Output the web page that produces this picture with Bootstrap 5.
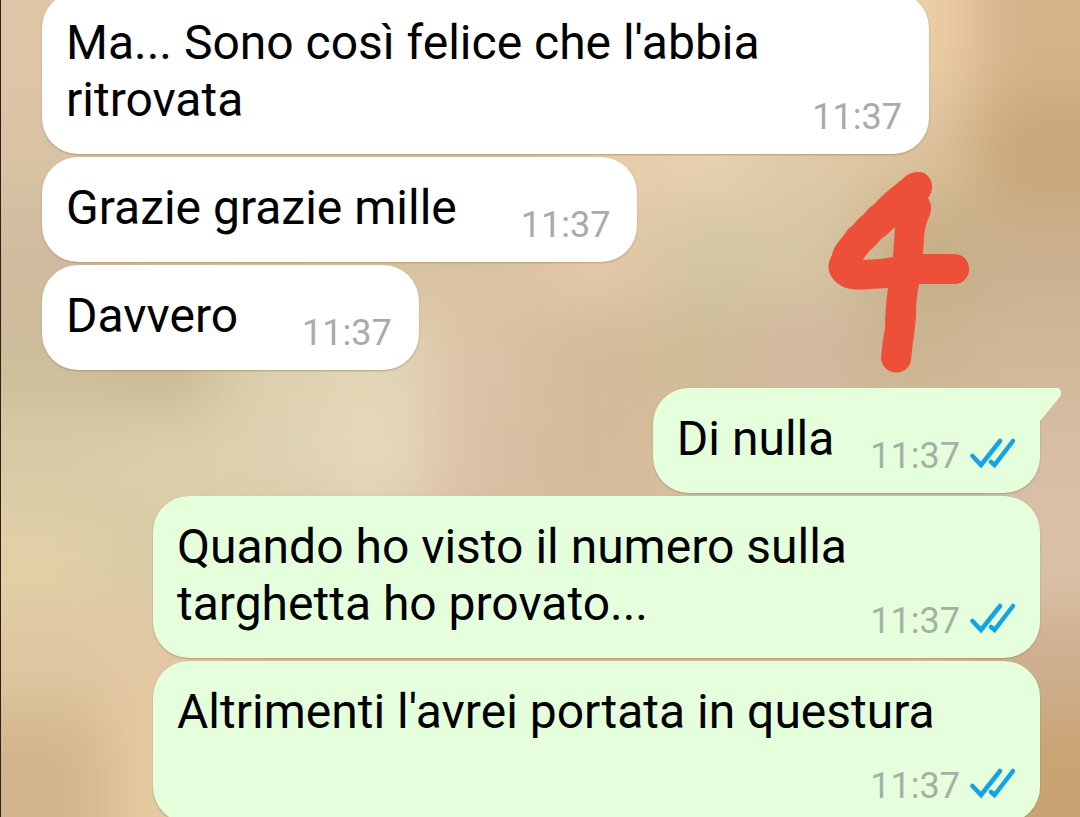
<!DOCTYPE html>
<html lang="it">
<head>
<meta charset="utf-8">
<meta name="viewport" content="width=device-width, initial-scale=1">
<title>Chat</title>
<link href="https://cdn.jsdelivr.net/npm/bootstrap@5.3.0/dist/css/bootstrap.min.css" rel="stylesheet">
<style>
  body { font-family: Roboto, "Noto Sans", sans-serif; }
  .chat-screen { border-left: 1px solid #2e2015; background: #d8bf9e; }
  .thread { padding: 0 40px 0 41px; margin-top: -8px; gap: 3px; }
  .bubble {
    display: flow-root;
    max-width: 887px;
    padding: 22px 25px 8px 24px;
    border-radius: 36px;
    background: #fff;
    color: #000;
    font-size: 48px;
    line-height: 57px;
    box-shadow: 0 1px 2px #8b735580;
  }
  .bubble-out { background: #e5ffdc; }
  .bubble-first { margin-top: 15px; border-top-right-radius: 0; }
  .stamp {
    float: right;
    margin: 18px 2px 0 64px;
    font-size: 36px;
    color: #a7abae;
  }
  .bubble-out .stamp { margin-left: 36px; margin-right: 0; color: #a5b0a5; }
  .ticks { width: 45px; height: 32px; margin: 0 0 6px 10px; }
  .tail { left: 100%; top: 0; width: 22px; height: 36px; }
  .scribble { left: 76%; top: 168px; width: 150px; height: 210px; }
</style>
</head>
<body>
<svg class="position-absolute" width="0" height="0" aria-hidden="true">
  <symbol id="read" viewBox="0 0 45 32">
    <g fill="none" stroke="#14a4e6" stroke-width="4.500" stroke-linecap="round">
      <path d="M2.500 18 11 27 30 3"/>
      <path d="M21 24 24.500 27 43 3"/>
    </g>
  </symbol>
</svg>
<main class="chat-screen position-relative vh-100 overflow-hidden">
  <!-- blurred wallpaper: a coarse grid of colour patches -->
  <svg class="position-absolute top-0 start-0 w-100 h-100" viewBox="0 0 10 8" preserveAspectRatio="none" aria-hidden="true">
    <filter id="soft" filterUnits="userSpaceOnUse" x="-1" y="-1" width="12" height="10" color-interpolation-filters="sRGB"><feGaussianBlur stdDeviation=".3"/></filter>
    <g filter="url(#soft)">
      <path d="M-1-1H11V9H-1Z" fill="#d8bf9e"/>
      <path d="M-1-1H1V1H-1Z" fill="#dfc5a6"/>
      <path d="M8-1H9V1H8Z" fill="#edcfa8"/>
      <path d="M9-1H11V1H9Z" fill="#d3b388"/>
      <path d="M-1 1H1V2H-1Z" fill="#d9c3a4"/>
      <path d="M5 1H6V2H5Z" fill="#e8cbab"/>
      <path d="M6 1H7V2H6Z" fill="#e8d2b0"/>
      <path d="M7 1H8V2H7Z" fill="#dfcaa7"/>
      <path d="M8 1H9V2H8Z" fill="#dcc29d"/>
      <path d="M9 1H11V2H9Z" fill="#c7a778"/>
      <path d="M-1 2H1V3H-1Z" fill="#d0bba0"/>
      <path d="M4 2H5V3H4Z" fill="#d8c4a0"/>
      <path d="M5 2H6V3H5Z" fill="#e4c9a8"/>
      <path d="M6 2H7V3H6Z" fill="#d5c5a3"/>
      <path d="M7 2H8V3H7Z" fill="#d6c5a4"/>
      <path d="M8 2H9V3H8Z" fill="#c5ae86"/>
      <path d="M9 2H11V3H9Z" fill="#cbb08f"/>
      <path d="M-1 3H1V4H-1Z" fill="#cebd99"/>
      <path d="M1 3H2V4H1Z" fill="#c8b794"/>
      <path d="M2 3H3V4H2Z" fill="#ddd0af"/>
      <path d="M3 3H4V4H3Z" fill="#e2d6b5"/>
      <path d="M4 3H5V4H4Z" fill="#dcc1a6"/>
      <path d="M5 3H6V4H5Z" fill="#d3bb99"/>
      <path d="M6 3H7V4H6Z" fill="#cebc96"/>
      <path d="M7 3H8V4H7Z" fill="#d2b7a0"/>
      <path d="M8 3H9V4H8Z" fill="#cbb691"/>
      <path d="M9 3H11V4H9Z" fill="#d3b79b"/>
      <path d="M-1 4H1V5H-1Z" fill="#d9caa5"/>
      <path d="M1 4H2V5H1Z" fill="#dccfac"/>
      <path d="M2 4H3V5H2Z" fill="#ddd2b2"/>
      <path d="M3 4H4V5H3Z" fill="#e5d9bb"/>
      <path d="M4 4H5V5H4Z" fill="#dbbfa5"/>
      <path d="M5 4H6V5H5Z" fill="#d5b99b"/>
      <path d="M9 4H11V5H9Z" fill="#d8bea4"/>
      <path d="M-1 5H1V6H-1Z" fill="#e1d0a7"/>
      <path d="M1 5H2V6H1Z" fill="#d9cba6"/>
      <path d="M9 5H11V6H9Z" fill="#dbc1a7"/>
      <path d="M-1 6H1V7H-1Z" fill="#dfc6a0"/>
      <path d="M1 6H2V7H1Z" fill="#e3c8a4"/>
      <path d="M9 6H11V7H9Z" fill="#cdaf8e"/>
      <path d="M-1 7H1V9H-1Z" fill="#d0b48c"/>
      <path d="M1 7H2V9H1Z" fill="#e8cba2"/>
      <path d="M9 7H11V9H9Z" fill="#caa373"/>
    </g>
  </svg>
  <div class="thread position-relative d-flex flex-column">
    <div class="bubble align-self-start">Ma... Sono così felice che l'abbia ritrovata <time class="stamp" datetime="11:37">11:37</time></div>
    <div class="bubble align-self-start">Grazie grazie mille <time class="stamp" datetime="11:37">11:37</time></div>
    <div class="bubble align-self-start">Davvero <time class="stamp" datetime="11:37">11:37</time></div>
    <div class="bubble bubble-out bubble-first align-self-end position-relative">Di nulla <span class="stamp d-flex align-items-center"><time datetime="11:37">11:37</time><svg class="ticks" role="img" aria-label="Letto"><use href="#read"/></svg></span>
      <svg class="tail position-absolute" viewBox="0 0 22 36" aria-hidden="true"><path d="M0 0H16C21 0 23 5 19 10L0 33Z" fill="#e5ffdc"/></svg>
    </div>
    <div class="bubble bubble-out align-self-end">Quando ho visto il numero sulla targhetta ho provato... <span class="stamp d-flex align-items-center"><time datetime="11:37">11:37</time><svg class="ticks" role="img" aria-label="Letto"><use href="#read"/></svg></span></div>
    <div class="bubble bubble-out align-self-end">Altrimenti l'avrei portata in questura <span class="stamp d-flex align-items-center"><time datetime="11:37">11:37</time><svg class="ticks" role="img" aria-label="Letto"><use href="#read"/></svg></span></div>
  </div>
  <svg class="scribble position-absolute" viewBox="821 168 150 210" role="img" aria-label="4">
    <path d="M918 172C930 171 937 187 928 198Q933 205 930 215Q925 224 924 237L923 254H954C974 254 974 284 954 284H919Q916 298 916 315Q915 331 913 342L911 360C908 378 882 376 881 358Q882 343 885 328Q885 310 888 288L870 289C858 290 847 290 840 285C829 278 825 267 832 255Q833 248 840 240Q845 234 848 229Q854 225 858 219Q865 214 870 207Q873 206 877 201Q887 191 894 186L906 176Q911 172 918 172ZM895 227Q888 234 881 239L873 248Q868 251 863 260Q878 260 893 257Z" fill="#ed4f39" fill-rule="evenodd"/>
  </svg>
</main>
<script src="https://cdn.jsdelivr.net/npm/bootstrap@5.3.0/dist/js/bootstrap.bundle.min.js"></script>
</body>
</html>
